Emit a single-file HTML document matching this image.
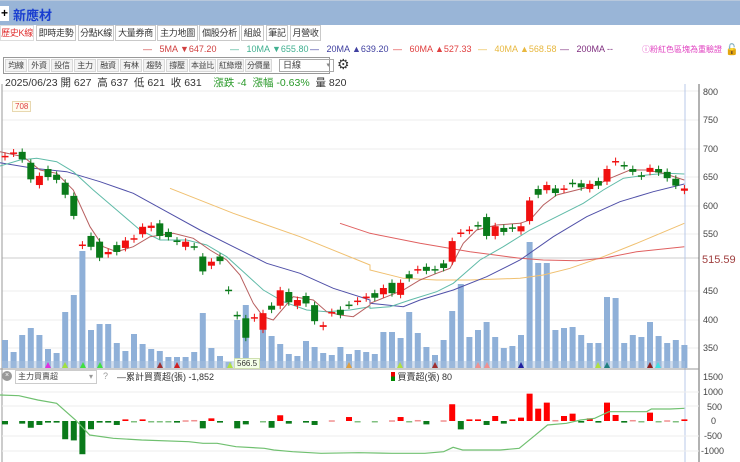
<!DOCTYPE html>
<html><head><meta charset="utf-8">
<style>
*{margin:0;padding:0;box-sizing:border-box}
body{width:740px;height:462px;overflow:hidden;background:#fff;font-family:"Liberation Sans","Noto Sans CJK TC",sans-serif;position:relative}
.t{position:absolute;white-space:nowrap}
#bar{position:absolute;left:0;top:0;width:740px;height:25px;background:#99b5d7;border-top:1px solid #b8c8dc}
#plus{position:absolute;left:0;top:5px;width:9px;height:15px;background:#fff;font-size:12px;line-height:15px;font-weight:bold;color:#000;text-align:center}
#title{left:13px;top:4px;font-size:13px;color:#1a3fd0;font-weight:bold}
.tab{position:absolute;top:25px;height:16px;border:1px solid #c9c9c9;background:#fff;font-size:9px;line-height:14px;text-align:center;color:#333;white-space:nowrap;overflow:hidden;letter-spacing:-0.3px}
.btn{position:absolute;top:59px;height:13px;border:1px solid #d8d8d8;background:#f3f3f3;font-size:8px;line-height:11px;text-align:center;color:#444;white-space:nowrap;overflow:hidden;letter-spacing:-0.3px}
.leg{top:44px;font-size:9px}
</style></head><body>
<div id="bar"><div id="plus">+</div><div class="t" id="title">新應材</div></div>
<div class="tab" style="left:0;width:34px;color:#e03030;border-color:#ddd">歷史K線</div>
<div class="tab" style="left:36px;width:40px">即時走勢</div>
<div class="tab" style="left:78px;width:36px">分點K線</div>
<div class="tab" style="left:115px;width:41px">大量券商</div>
<div class="tab" style="left:157px;width:41px">主力地圖</div>
<div class="tab" style="left:199px;width:41px">個股分析</div>
<div class="tab" style="left:241px;width:23px">組設</div>
<div class="tab" style="left:266px;width:22px">筆記</div>
<div class="tab" style="left:290px;width:31px">月營收</div>

<div class="t leg" style="left:143px;color:#d04040">—&nbsp;&nbsp;&nbsp;5MA ▼647.20</div>
<div class="t leg" style="left:230px;color:#40b090">—&nbsp;&nbsp;&nbsp;10MA ▼655.80</div>
<div class="t leg" style="left:310px;color:#4040a0">—&nbsp;&nbsp;&nbsp;20MA ▲639.20</div>
<div class="t leg" style="left:393px;color:#e04040">—&nbsp;&nbsp;&nbsp;60MA ▲527.33</div>
<div class="t leg" style="left:478px;color:#e8b840">—&nbsp;&nbsp;&nbsp;40MA ▲568.58</div>
<div class="t leg" style="left:560px;color:#803080">—&nbsp;&nbsp;&nbsp;200MA --</div>
<div class="t leg" style="left:642px;color:#e040c0;font-size:8px">ⓘ粉紅色區塊為重驗證</div>
<div class="t" style="left:725px;top:43px;font-size:11px">🔓</div>

<div style="position:absolute;left:3px;top:57px;width:327px;height:17px;border:1px solid #999"></div>
<div class="btn" style="left:5px;width:22px">均線</div>
<div class="btn" style="left:28px;width:22px">外資</div>
<div class="btn" style="left:51px;width:22px">投信</div>
<div class="btn" style="left:74px;width:22px">主力</div>
<div class="btn" style="left:97px;width:22px">融資</div>
<div class="btn" style="left:120px;width:22px">有林</div>
<div class="btn" style="left:143px;width:22px">趨勢</div>
<div class="btn" style="left:166px;width:22px">撐壓</div>
<div class="btn" style="left:189px;width:27px">本益比</div>
<div class="btn" style="left:217px;width:27px">紅綠燈</div>
<div class="btn" style="left:245px;width:27px">分價量</div>
<div style="position:absolute;left:279px;top:59px;width:55px;height:13px;border:1px solid #aaa;font-size:9px;line-height:11px;padding-left:3px;color:#444">日線<span style="position:absolute;right:3px;font-size:7px;color:#888">▾</span></div>
<div class="t" style="left:337px;top:56px;font-size:14px;color:#333">⚙</div>
<div class="t" style="left:5px;top:75px;font-size:10.5px;color:#333">2025/06/23 開 627&nbsp; 高 637&nbsp; 低 621&nbsp; 收 631&nbsp;&nbsp;&nbsp; <span style="color:#2a9a2a">漲跌 -4&nbsp; 漲幅 -0.63%</span>&nbsp; 量 820</div>

<svg id="c" style="position:absolute;left:0;top:0" width="740" height="462">
<g font-size="9" fill="#444" font-family="Liberation Sans,sans-serif">
<text x="703" y="95">800</text><text x="703" y="123">750</text><text x="703" y="152">700</text><text x="703" y="180">650</text><text x="703" y="209">600</text><text x="703" y="237">550</text><text x="703" y="294">450</text><text x="703" y="323">400</text><text x="703" y="351">350</text>
<text x="702" y="263" font-size="11" fill="#a04040">515.59</text>
<text x="703" y="380">1500</text><text x="703" y="395">1000</text><text x="707" y="410">500</text><text x="711" y="424">0</text><text x="704" y="439">-500</text><text x="701" y="454">-1000</text>
</g>
</svg>
<div class="t" style="left:12px;top:101px;font-size:8px;color:#e04040;border:1px solid #e8d8b0;background:#fffdf0;padding:0 2px">708</div>
<div class="t" style="left:234px;top:358px;font-size:8px;color:#333;border:1px solid #cfe0b0;background:#f4ffe8;padding:0 2px">566.5</div>
<div style="position:absolute;left:2px;top:371px;width:10px;height:10px;border-radius:5px;background:#999;color:#fff;font-size:7px;line-height:10px;text-align:center">×</div>
<div style="position:absolute;left:15px;top:370px;width:82px;height:14px;border:1px solid #ccc;font-size:8px;line-height:12px;padding-left:2px;color:#444">主力買賣超<span style="position:absolute;right:3px;color:#999">▾</span></div>
<div class="t" style="left:103px;top:371px;font-size:9px;color:#999">?</div>
<div class="t" style="left:117px;top:370px;font-size:9px;color:#333">—累計買賣超(張) -1,852</div>
<div class="t" style="left:391px;top:370px;font-size:9px;color:#333"><span style="display:inline-block;width:4px;height:9px;background:linear-gradient(#e00 50%,#080 50%);vertical-align:-1px"></span> 買賣超(張) 80</div>
<script>
var s=document.getElementById('c'),h='';
function Y(p){return 149+(700-p)*0.572}
function X(i){return 5+(i-1)*8.6}
[91,120,149,177,206,234,291,320,348].forEach(function(y){h+='<line x1="2" x2="699" y1="'+y+'" y2="'+y+'" stroke="#eee"/>'});
h+='<line x1="2" x2="699" y1="258" y2="258" stroke="#ccc"/>';
h+='<line x1="2" x2="2" y1="84" y2="462" stroke="#999"/><line x1="699" x2="699" y1="84" y2="462" stroke="#666"/>';
h+='<line x1="685" x2="685" y1="84" y2="462" stroke="#b8c8e8"/>';
h+='<line x1="0" x2="699" y1="369" y2="369" stroke="#999"/>';
[392,406,436,451].forEach(function(y){h+='<line x1="2" x2="699" y1="'+y+'" y2="'+y+'" stroke="#eee"/>'});
var v=[340,352,335,328,335,349,353,312,295,251,330,324,324,343,351,334,344,349,351,357,357,357,352,313,348,356,362,320,305,362,328,336,344,354,356,341,347,353,355,347,354,350,352,354,332,332,338,312,333,347,355,340,311,284,337,330,322,337,348,346,335,242,263,263,330,328,327,335,343,343,297,298,343,335,337,322,336,343,340,345];
v.forEach(function(t,k){var x=X(k+1);h+='<rect x="'+(x-3)+'" y="'+t+'" width="6" height="'+(368-t)+'" fill="#8fb0d8"/>'});
h+='<rect x="2" y="361" width="683" height="7" fill="#a8c0de" opacity=".5"/>';
[[48,'#e030e0'],[65,'#a0e040'],[83,'#40e040'],[100,'#40e040'],[160,'#a03030'],[177,'#d02020'],[230,'#b0e040'],[237,'#40e040'],[349,'#e0a040'],[400,'#b0e040'],[435,'#a03030'],[478,'#f09090'],[487,'#f09090'],[521,'#2020a0'],[598,'#b0e040'],[607,'#208080'],[650,'#902020'],[658,'#40e0e0']].forEach(function(m){h+='<polygon points="'+(m[0]-3)+',368 '+(m[0]+3)+',368 '+m[0]+',362" fill="'+m[1]+'"/>'});
function pl(pts,c,sx,sy){var a=[];for(var i=0;i<pts.length;i+=2)a.push((pts[i]/3+sx).toFixed(1)+','+(pts[i+1]/3+sy).toFixed(1));return a.join(' ')}
function line(L,R,c){h+='<polyline fill="none" stroke="'+c+'" stroke-width="1" points="'+(L?pl(L,c,0,90):'')+' '+pl(R,c,370,90)+'"/>'}
line([510,295,700,370,900,440,1110,525],[0,540,100,565,200,570,300,570,450,565,520,555,600,535,700,500,800,460,943,400],'#f0c070');
line([1020,400,1110,430],[0,430,150,460,300,485,450,505,520,510,620,512,700,505,800,485,943,470],'#e06060');
line([0,218,100,235,200,245,300,275,400,310,500,365,600,420,700,470,800,520,900,550,1000,595,1110,630],[0,640,100,650,150,630,250,600,350,560,450,510,550,440,650,380,750,335,850,305,943,282],'#5050a8');
line([0,228,60,210,110,205,170,215,220,245,280,300,350,360,420,420,480,450,560,450,620,465,680,500,730,545,790,600,850,635,920,660,980,665,1050,660,1110,650],[0,655,60,650,120,630,200,605,250,580,330,510,400,470,480,420,560,380,640,340,700,300,760,265,830,255,890,250,943,252],'#60bba8');
line([0,185,70,200,120,240,170,250,220,300,270,410,310,470,350,485,400,470,450,440,520,430,580,445,630,480,680,510,720,555,760,640,790,680,820,690,880,620,940,630,980,665,1020,675,1060,680,1110,645],[0,640,50,620,100,600,150,570,200,550,240,535,280,460,320,420,380,405,450,400,480,390,520,345,560,315,620,300,680,285,720,265,780,240,830,240,880,250,943,270],'#b86060');
var c=[[686,688],[692,694],[695,682],[676,647],[637,653],[665,651],[655,646],[641,620],[618,583],[531,533],[548,529],[538,510],[516,520],[532,520],[527,540],[542,544],[551,564],[562,566],[570,548],[555,546],[540,538],[529,538],[530,529],[512,486],[496,503],[512,504],[454,452],[410,408],[404,370],[404,406],[384,413],[426,419],[426,453],[450,432],[426,436],[443,430],[427,399],[389,392],[413,415],[419,410],[428,426],[433,435],[439,442],[448,440],[446,457],[466,448],[445,466],[481,474],[488,490],[494,487],[490,488],[500,492],[503,539],[552,554],[557,559],[567,565],[581,548],[548,565],[562,555],[563,561],[556,565],[574,610],[630,620],[628,637],[631,623],[629,631],[641,639],[640,633],[630,639],[644,636],[643,665],[677,679],[672,670],[665,660],[654,652],[660,667],[665,659],[660,649],[648,636],[627,631]];
c.forEach(function(d,k){var x=X(k+1),up=d[1]>d[0],col=up?'#f01010':'#0a7a1a';var hi=Math.max(d[0],d[1])+6,lo=Math.min(d[0],d[1])-6;
h+='<line x1="'+x+'" x2="'+x+'" y1="'+Y(hi)+'" y2="'+Y(lo)+'" stroke="'+col+'"/>';
var t=Y(Math.max(d[0],d[1])),b=Y(Math.min(d[0],d[1]));h+='<rect x="'+(x-3.5)+'" y="'+t+'" width="7" height="'+Math.max(b-t,1.5)+'" fill="'+col+'"/>'});
var ib={1:-115,3:-90,4:-230,5:-135,6:-55,7:-55,8:-620,9:-660,10:-1130,11:-280,12:-55,13:-55,14:-135,15:55,16:-35,17:55,18:-35,19:-35,20:-35,21:-55,22:25,23:35,24:-250,25:90,26:-55,28:-250,29:-115,31:-35,32:-230,33:195,34:-90,36:-55,37:-135,39:25,41:135,42:-35,44:-25,46:25,47:135,48:-35,49:35,50:-115,52:25,53:570,54:-285,55:55,56:55,57:-135,58:170,59:-90,60:55,61:115,62:930,63:420,64:625,65:35,66:170,67:250,68:-55,69:90,70:-55,71:625,72:205,73:-55,74:35,75:-35,76:285,77:-35,78:25,79:-35,80:55};
for(var k in ib){var val=ib[k],x=X(+k),yy=421-val*14.7/500;var small=Math.abs(val)<40;var col=val>0?(small?'#f09090':'#f00'):(small?'#80c080':'#0a7a1a');
h+='<rect x="'+(x-3)+'" y="'+Math.min(yy,421)+'" width="6" height="'+Math.max(Math.abs(421-yy),1.5)+'" fill="'+col+'"/>'}
var g=[0,105,40,107,80,120,120,130,160,180,190,225,240,235,300,240,400,245,430,250,460,250,500,260,560,265,580,270,620,275,680,280,760,278,830,280,900,280,940,275,960,262,980,270,1030,270,1060,270,1100,265,1130,230,1160,195,1200,190,1230,180,1260,175,1290,155,1330,155,1370,155,1380,147,1420,147,1450,145],a=[];
for(var i=0;i<g.length;i+=2)a.push((g[i]*0.472).toFixed(1)+','+(360+g[i+1]/3).toFixed(1));
h+='<polyline fill="none" stroke="#70c070" stroke-width="1.2" points="'+a.join(' ')+'"/>';
s.insertAdjacentHTML('afterbegin',h);
</script>
</body></html>
